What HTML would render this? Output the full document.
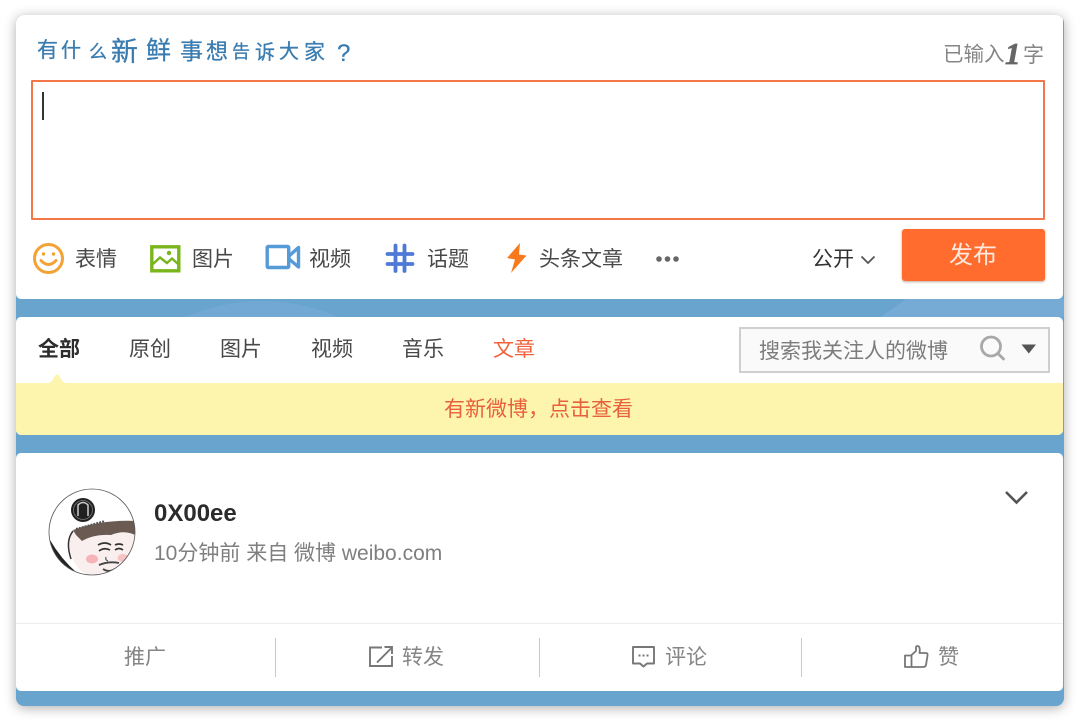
<!DOCTYPE html>
<html lang="zh">
<head>
<meta charset="utf-8">
<style>
html,body{margin:0;padding:0;background:#fff;}
body{width:1080px;height:722px;position:relative;overflow:hidden;font-family:"Liberation Sans","Noto Sans CJK SC",sans-serif;color:#333;}
.a{position:absolute;white-space:nowrap;line-height:1;}
.t{font-size:21px;color:#484848;}
.g{font-size:21px;color:#858585;}
svg{position:absolute;overflow:visible;}
#wrap{position:absolute;left:16px;top:15px;width:1048px;height:691px;border-radius:8px;background:#69a4cf;box-shadow:0 2px 12px rgba(0,0,0,.32);overflow:hidden;}
.card{position:absolute;left:0;width:1047px;background:#fff;border-radius:5px;}
.ti{position:absolute;color:#3a7cb0;line-height:1;font-family:"WenQuanYi Zen Hei","Noto Sans CJK SC",sans-serif;-webkit-text-stroke:.3px #3a7cb0;}
</style>
</head>
<body>
<div id="wrap">
  <svg style="left:0;top:284px" width="1048" height="18"><path d="M170 18Q246 -14 322 18Z" fill="#72a9d4"/><path d="M865 18L890 0H1048V18Z" fill="#75abd4"/></svg>
  <div class="card" style="top:0;height:284px;"></div>
  <div class="card" style="top:302px;height:118px;overflow:hidden;">
    <div style="position:absolute;left:0;top:66px;width:1047px;height:52px;background:#fdf5ad;"></div>
  </div>
  <div class="card" style="top:438px;height:238px;"></div>
</div>

<span class="ti" style="left:37px;top:39px;font-size:21px">有</span>
<span class="ti" style="left:61px;top:39px;font-size:20px">什</span>
<span class="ti" style="left:89px;top:42px;font-size:18px">么</span>
<span class="ti" style="left:111px;top:36px;font-size:27px">新</span>
<span class="ti" style="left:146px;top:37px;font-size:25px">鲜</span>
<span class="ti" style="left:180px;top:38px;font-size:23px">事</span>
<span class="ti" style="left:206px;top:39px;font-size:22px">想</span>
<span class="ti" style="left:232px;top:42px;font-size:18px">告</span>
<span class="ti" style="left:255px;top:41px;font-size:20px">诉</span>
<span class="ti" style="left:279px;top:40px;font-size:20px">大</span>
<span class="ti" style="left:304px;top:41px;font-size:21px">家</span>
<span class="ti" style="left:337px;top:42px;font-size:24px;font-family:'Liberation Sans',sans-serif">?</span>

<span class="a g" style="left:943px;top:45px;font-size:20.5px;">已输入</span>
<span class="a" style="left:1005px;top:36px;font:italic bold 31px 'Liberation Serif',serif;color:#666;-webkit-text-stroke:.8px #666;">1</span>
<span class="a g" style="left:1023px;top:45px;">字</span>

<div style="position:absolute;left:31px;top:80px;width:1010px;height:136px;border:2px solid #f2784a;border-radius:1px;"></div>
<div style="position:absolute;left:42px;top:92px;width:2px;height:28px;background:#333;"></div>

<!-- smile -->
<svg style="left:32px;top:242px" width="32" height="32" viewBox="0 0 32 32" fill="none" stroke="#f3a235" stroke-width="3" stroke-linecap="round"><circle cx="16.500" cy="16.500" r="14"/><path d="M9 18.500Q16.500 26.500 24 18.500"/><circle cx="11.500" cy="12" r="1.700" fill="#f3a235" stroke="none"/><circle cx="21.500" cy="12" r="1.700" fill="#f3a235" stroke="none"/></svg>
<span class="a t" style="left:75px;top:249px;">表情</span>
<!-- image -->
<svg style="left:149px;top:244px" width="33" height="29" viewBox="0 0 33 29"><rect x="2.800" y="2.800" width="27" height="24" fill="#fff" stroke="#7ab51d" stroke-width="3.400"/><path d="M4 20L11 13.500L18 19L23 14.500L29 20" fill="none" stroke="#7ab51d" stroke-width="2.400"/><circle cx="20" cy="9" r="2.200" fill="#7ab51d"/></svg>
<span class="a t" style="left:192px;top:249px;">图片</span>
<!-- video -->
<svg style="left:265px;top:244px" width="36" height="27" viewBox="0 0 36 27" fill="none" stroke="#559bd8" stroke-width="3.400" stroke-linejoin="round"><rect x="2.200" y="2.500" width="21.500" height="21" rx="1"/><path d="M24 12L33.500 3.500V23L24 15Z"/></svg>
<span class="a t" style="left:309px;top:249px;">视频</span>
<!-- hash -->
<svg style="left:384px;top:242px" width="30" height="30" viewBox="0 0 30 30" stroke="#4f79d6" stroke-width="3.800" stroke-linecap="round"><path d="M11.500 3.500V29M20.500 3.500V29M3.500 12H28.500M3.500 22H28.500"/></svg>
<span class="a t" style="left:427px;top:249px;">话题</span>
<!-- bolt -->
<svg style="left:506px;top:243px" width="22" height="30" viewBox="0 0 22 30"><path d="M14 0L1 15L9 16.500L5 30L20.500 12.500L13 11.500Z" fill="#f7791e"/></svg>
<span class="a t" style="left:539px;top:249px;">头条文章</span>
<svg style="left:656px;top:254px" width="24" height="10"><circle cx="3" cy="5" r="2.800" fill="#666"/><circle cx="11.500" cy="5" r="2.800" fill="#666"/><circle cx="20" cy="5" r="2.800" fill="#666"/></svg>
<span class="a t" style="left:812px;top:249px;color:#333">公开</span>
<svg style="left:860px;top:255px" width="16" height="10" fill="none" stroke="#555" stroke-width="1.800"><path d="M1.500 1.500L8 8L14.500 1.500"/></svg>
<div style="position:absolute;left:902px;top:229px;width:143px;height:52px;background:#ff6c2e;border-radius:3px;box-shadow:0 1px 2px rgba(120,60,30,.45);"></div>
<span class="a" style="left:949px;top:244px;font-size:24px;color:#ffe9dc;">发布</span>

<!-- tabs -->
<span class="a t" style="left:38px;top:339px;color:#2d2d2d;font-weight:bold;">全部</span>
<span class="a t" style="left:129px;top:339px;">原创</span>
<span class="a t" style="left:220px;top:339px;">图片</span>
<span class="a t" style="left:311px;top:339px;">视频</span>
<span class="a t" style="left:402px;top:339px;">音乐</span>
<span class="a t" style="left:493px;top:339px;color:#f0623c;">文章</span>
<svg style="left:44px;top:372px" width="26" height="12"><path d="M2 12Q8 11 10 5Q13 0 16 5Q18 11 24 12Z" fill="#fdf5ad"/></svg>

<div style="position:absolute;left:739px;top:327px;width:307px;height:42px;border:2px solid #cfcfcf;background:#fafafa;"></div>
<span class="a" style="left:759px;top:341px;font-size:21px;color:#7c7c7c;">搜索我关注人的微博</span>
<svg style="left:980px;top:336px" width="26" height="26" fill="none" stroke="#a8a8a8" stroke-width="2.800" stroke-linecap="round"><circle cx="11" cy="10.500" r="9.500"/><path d="M18 17.500L23.500 23"/></svg>
<svg style="left:1021px;top:344px" width="16" height="10"><path d="M.5 .5H15L7.800 9.500Z" fill="#555"/></svg>

<span class="a" style="left:444px;top:399px;font-size:21px;color:#e8603c;">有新微博，点击查看</span>

<!-- post -->
<svg style="left:49px;top:489px" width="88" height="88" viewBox="0 0 88 88">
  <defs><clipPath id="av"><circle cx="43" cy="43" r="43"/></clipPath></defs>
  <circle cx="43" cy="43" r="43" fill="#fff"/>
  <g clip-path="url(#av)">
    <path d="M24 42Q14 60 30 80Q40 90 60 90H90V44Z" fill="#f9efee"/>
    <path d="M24 41Q55 30 88 32V47Q76 40 62 46Q45 45 33 52L27 46Z" fill="#6b5a52"/>
    <path d="M0 50Q6 76 36 88L20 88Q10 80 2 62Z" fill="#1f1f1f"/>
    <path d="M1 51Q12 70 28 84L38 88L16 88L0 70Z" fill="#222"/>
    <path d="M24 42Q16 52 22 70" fill="none" stroke="#333" stroke-width="1.500"/>
    <ellipse cx="43" cy="70" rx="6" ry="4.500" fill="#f7b3b8"/><ellipse cx="74" cy="69" rx="5.500" ry="4" fill="#f7c2c4"/>
    <path d="M49 56Q56 52 62 56M50 62Q55 58 61 61M66 56Q70 54 74 56M66 61Q70 58 74 61" fill="none" stroke="#333" stroke-width="1.700"/>
    <path d="M57 68Q56 71 59 72" fill="none" stroke="#555" stroke-width="1.200"/>
    <path d="M50 76Q60 72 70 74M54 80Q60 84 66 80" fill="none" stroke="#444" stroke-width="1.800"/>
    <circle cx="34" cy="21" r="12" fill="#202020"/><path d="M29 27V16Q34 11 39 16V27" fill="none" stroke="#ccc" stroke-width="1.500"/><circle cx="34" cy="21" r="9.500" fill="none" stroke="#777" stroke-width=".8"/>
    <path d="M27 40L56 32" stroke="#555" stroke-width="2" stroke-dasharray="2 1"/>
  </g>
  <circle cx="43" cy="43" r="43" fill="none" stroke="#555" stroke-width=".8"/>
</svg>
<span class="a" style="left:154px;top:502px;font-size:24px;font-weight:bold;color:#2b2b2b;">0X00ee</span>
<span class="a" style="left:154px;top:543px;font-size:21px;color:#7f7f7f;">10分钟前 来自 微博 weibo.com</span>
<svg style="left:1004px;top:490px" width="25" height="15" fill="none" stroke="#555" stroke-width="2.600"><path d="M2 2L12.500 12.500L23 2"/></svg>

<div style="position:absolute;left:16px;top:623px;width:1047px;height:1px;background:#ededed;"></div>
<div style="position:absolute;left:275px;top:638px;width:1px;height:39px;background:#c9c9c9;"></div>
<div style="position:absolute;left:539px;top:638px;width:1px;height:39px;background:#c9c9c9;"></div>
<div style="position:absolute;left:801px;top:638px;width:1px;height:39px;background:#c9c9c9;"></div>

<span class="a g" style="left:124px;top:647px;">推广</span>
<svg style="left:369px;top:645px" width="25" height="24" fill="none" stroke="#777" stroke-width="1.900"><path d="M13 2.500H1V21H23V11"/><path d="M8 17.500L22.500 3M15.500 2H23V9"/></svg>
<span class="a g" style="left:402px;top:647px;">转发</span>
<svg style="left:631px;top:645px" width="25" height="24" fill="none" stroke="#777" stroke-width="1.900" stroke-linejoin="round"><path d="M2 2H23V18.500H16L12.500 21.500L9 18.500H2Z"/><path d="M7.500 10.500H18" stroke-dasharray="2 2"/></svg>
<span class="a g" style="left:665px;top:647px;">评论</span>
<svg style="left:904px;top:645px" width="25" height="24" fill="none" stroke="#777" stroke-width="1.800" stroke-linejoin="round"><path d="M7.500 10L12 6V2.500Q12 1 13.500 1Q16.500 1 15.500 8H22Q24 8 23.500 10.500L22 20Q21.500 22 19 22H7.500ZM1 10.500H7.500V22H1Z"/></svg>
<span class="a g" style="left:938px;top:647px;">赞</span>
</body>
</html>
